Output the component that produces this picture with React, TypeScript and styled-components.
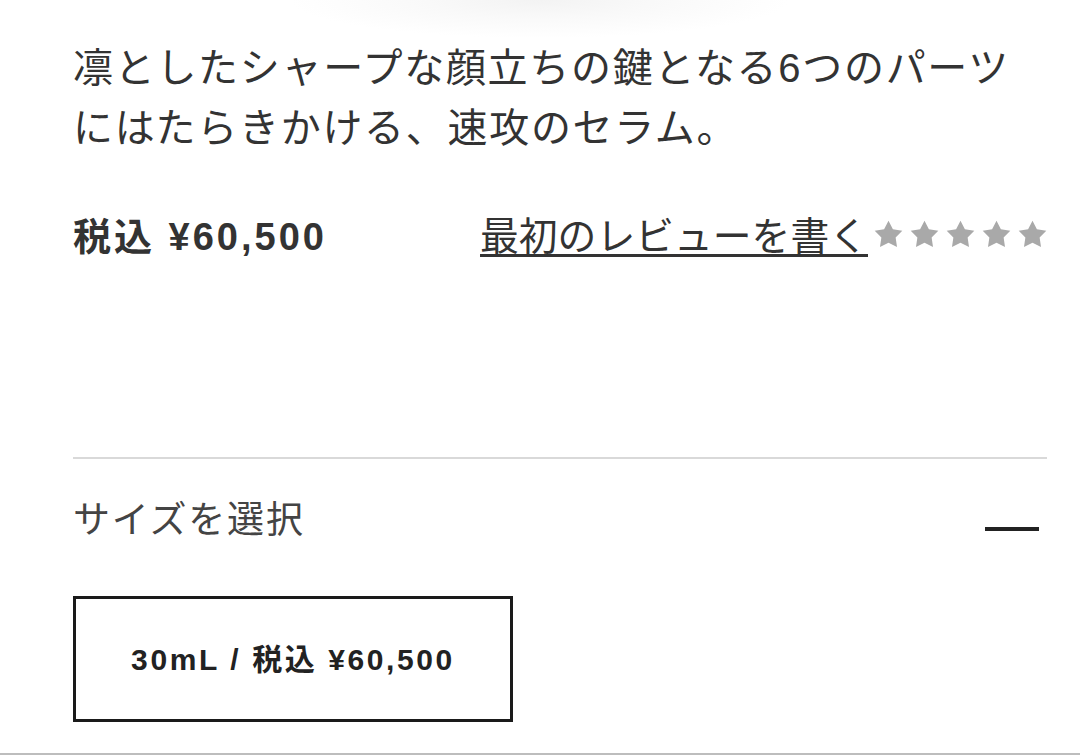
import React from 'react';
import styled, { createGlobalStyle } from 'styled-components';

const GlobalStyle = createGlobalStyle`
  html, body {
    margin: 0;
    padding: 0;
    background: #fff;
  }
  body {
    font-family: "Liberation Sans", "Noto Sans CJK JP", sans-serif;
    color: #333;
  }
`;

const Page = styled.div`
  width: 1080px;
  height: 755px;
  overflow: hidden;
  display: flex;
  flex-direction: column;
`;

const ImageShadow = styled.div`
  height: 38px;
  background: radial-gradient(ellipse 250px 38px at 540px 0, #f3f3f3 0%, #f9f9f9 45%, rgba(255, 255, 255, 0) 100%);
`;

const Content = styled.div`
  padding: 0 33px 0 73px;
  flex: 1;
`;

const Description = styled.p`
  margin: 0;
  max-width: 948px;
  font-size: 40px;
  line-height: 60px;
  letter-spacing: 1.7px;
  color: #333;
`;

const PriceRow = styled.div`
  display: flex;
  justify-content: space-between;
  align-items: center;
  margin-top: 53px;
  height: 44px;
`;

const Price = styled.span`
  font-size: 38px;
  font-weight: 700;
  letter-spacing: 3px;
  color: #333;
`;

const ReviewBox = styled.div`
  display: flex;
  align-items: center;
  gap: 6px;
`;

const ReviewLink = styled.a`
  font-size: 38.8px;
  white-space: nowrap;
  color: #333;
  text-decoration: underline;
  text-decoration-thickness: 2.5px;
  text-underline-offset: 4px;
  cursor: pointer;
`;

const Stars = styled.div`
  display: flex;
  flex-shrink: 0;
  gap: 7px;
  margin-top: 1px;
`;

const Divider = styled.hr`
  margin: 202px 0 0;
  border: none;
  border-top: 2px solid #d9d9d9;
`;

const SectionHeader = styled.div`
  display: flex;
  justify-content: space-between;
  align-items: center;
  height: 120px;
`;

const SectionTitle = styled.span`
  font-size: 37px;
  letter-spacing: 1.8px;
  color: #444;
  margin-top: -5px;
`;

const Collapse = styled.span`
  width: 54px;
  height: 4px;
  background: #222;
  margin-right: 8px;
  margin-top: 20px;
`;

const SizeOption = styled.button<{ selected?: boolean }>`
  display: flex;
  align-items: center;
  justify-content: center;
  width: 440px;
  height: 126px;
  margin-top: 17px;
  padding: 0 0 5px;
  background: #fff;
  border: 3px solid ${props => (props.selected ? '#1a1a1a' : '#ccc')};
  font-family: "Liberation Sans", "Noto Sans CJK JP", sans-serif;
  font-size: 30px;
  font-weight: 700;
  letter-spacing: 2.6px;
  color: #222;
  cursor: pointer;
`;

const Footer = styled.div`
  height: 2px;
  background: #bdbdbd;
`;

function Star() {
  return (
    <svg width="29" height="28" viewBox="0 0 24 23">
      <path
        d="M12 0.5L15.64 7.48 23.41 8.79 17.9 14.42 19.05 22.21 12 18.7 4.95 22.21 6.1 14.42 0.59 8.79 8.36 7.48Z"
        fill="#a9a9a9"
      />
    </svg>
  );
}

export default function App() {
  return (
    <>
      <GlobalStyle />
      <Page>
        <ImageShadow />
        <Content>
          <Description>
            凛としたシャープな顔立ちの鍵となる6つのパーツにはたらきかける、速攻のセラム。
          </Description>
          <PriceRow>
            <Price>税込 ¥60,500</Price>
            <ReviewBox>
              <ReviewLink>最初のレビューを書く</ReviewLink>
              <Stars>
                {[0, 1, 2, 3, 4].map(i => (
                  <Star key={i} />
                ))}
              </Stars>
            </ReviewBox>
          </PriceRow>
          <Divider />
          <SectionHeader>
            <SectionTitle>サイズを選択</SectionTitle>
            <Collapse />
          </SectionHeader>
          <SizeOption selected>30mL / 税込 ¥60,500</SizeOption>
        </Content>
        <Footer />
      </Page>
    </>
  );
}
